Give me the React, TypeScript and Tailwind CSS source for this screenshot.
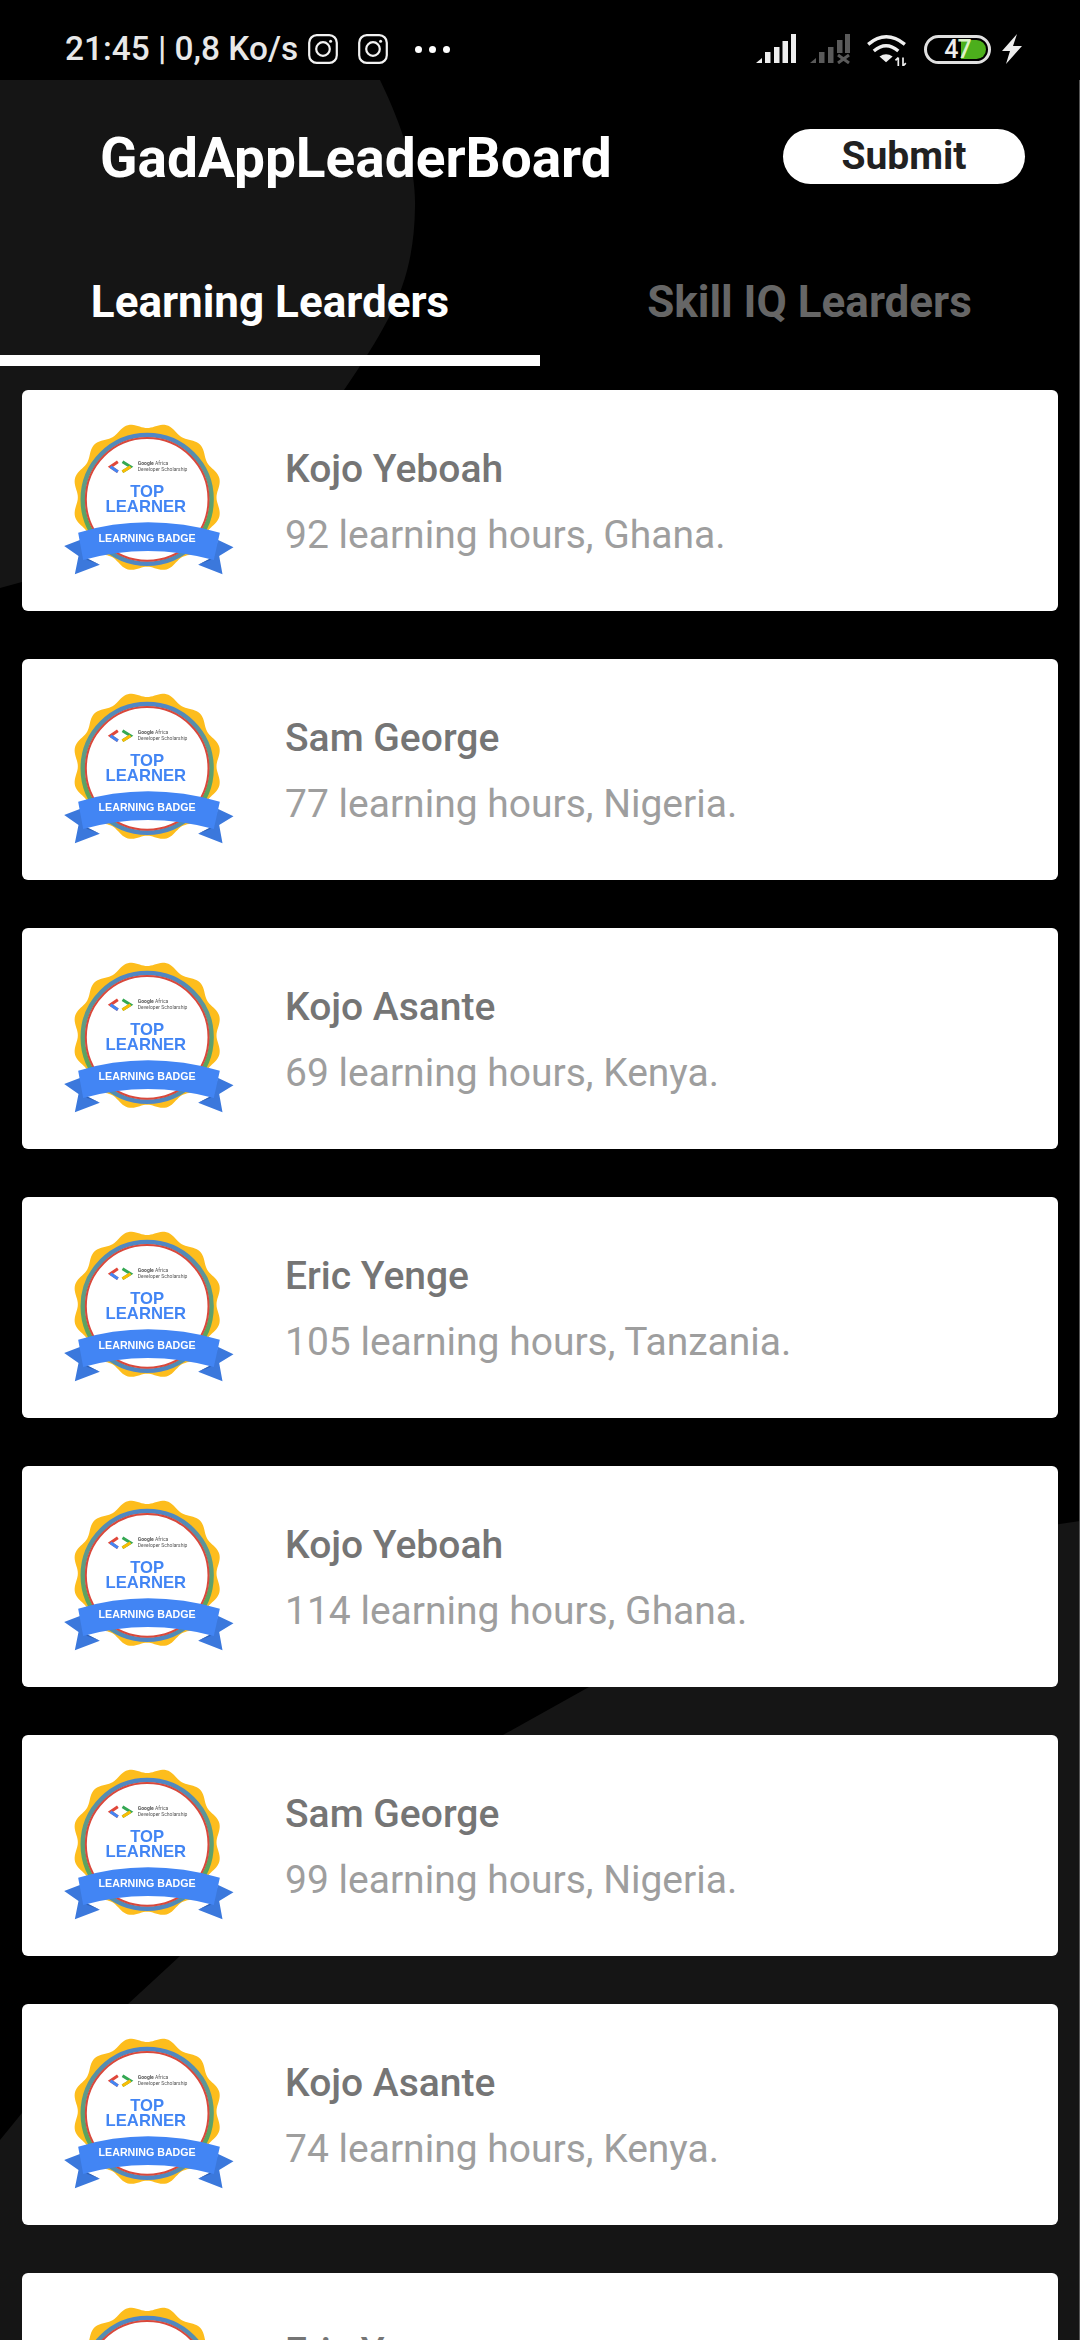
const font = "font-['Roboto',sans-serif]";

const scallop = (() => {
  const cx = 442, cy = 484, R = 216, a = 8, lobes = 12;
  const pts: string[] = [];
  for (let i = 0; i < 240; i++) {
    const t = (i / 240) * Math.PI * 2;
    const r = R + a * Math.cos(lobes * t + Math.PI);
    pts.push(`${(cx + r * Math.sin(t)).toFixed(1)} ${(cy - r * Math.cos(t)).toFixed(1)}`);
  }
  return `M${pts.join("L")}Z`;
})();

function Badge({ id }: { id: number }) {
  const g = `ring-${id}`;
  return (
    <svg viewBox="190 255 515 462" className="w-[172px] h-[154px] shrink-0 blur-[0.4px] -mt-[6px]">
      <defs>
        <linearGradient id={g} x1="0" y1="0" x2="0" y2="1">
          <stop offset="0" stopColor="#4f86c6" />
          <stop offset="0.35" stopColor="#5f9a8a" />
          <stop offset="0.7" stopColor="#5ba55b" />
          <stop offset="1" stopColor="#4f86c6" />
        </linearGradient>
      </defs>
      <path d={scallop} fill="#fdbd1d" />
      <circle cx="442" cy="490" r="193" fill="#fff" stroke={`url(#${g})`} strokeWidth="14" />
      <circle cx="442" cy="490" r="184" fill="#fff" stroke="#d9483b" strokeWidth="6" />
      <path d="M354 377 L332 392 L354 407" fill="none" stroke="#e0473a" strokeWidth="9" />
      <path d="M332 392 L354 407" fill="none" stroke="#4285f4" strokeWidth="9" />
      <path d="M368 377 L392 392 L368 407" fill="none" stroke="#34a853" strokeWidth="9" />
      <path d="M392 392 L368 407" fill="none" stroke="#fbbc05" strokeWidth="9" />
      <text x="414" y="386" fontSize="15" fontWeight="700" fill="#555" fontFamily="Roboto, sans-serif">Google <tspan fontWeight="400">Africa</tspan></text>
      <text x="414" y="405" fontSize="15" fill="#555" fontFamily="Roboto, sans-serif">Developer Scholarship</text>
      <text x="442" y="484" textAnchor="middle" fontSize="50" fontWeight="700" fill="#4285f4" fontFamily="'Liberation Sans', sans-serif">TOP</text>
      <text x="438" y="528" textAnchor="middle" fontSize="50" fontWeight="700" fill="#4285f4" fontFamily="'Liberation Sans', sans-serif">LEARNER</text>
      <path d="M193 630 L240 612 L262 668 L300 686 L225 715 L236 660 Z" fill="#3b78dc" />
      <path d="M701 634 L655 612 L632 668 L595 686 L668 715 L658 660 Z" fill="#3b78dc" />
      <path d="M248 660 L300 686 L262 672 Z" fill="#2f62b8" />
      <path d="M645 660 L595 686 L632 672 Z" fill="#2f62b8" />
      <path d="M235 590 Q442 528 660 590 L642 672 Q442 618 250 672 Z" fill="#4285f4" />
      <text x="442" y="617" textAnchor="middle" fontSize="32" fontWeight="700" fill="#fff" fontFamily="'Liberation Sans', sans-serif">LEARNING BADGE</text>
    </svg>
  );
}

function Insta() {
  return (
    <svg viewBox="0 0 30 30" className="w-[30px] h-[30px]" fill="none" stroke="#f2f2f2" strokeWidth="2.2">
      <rect x="1.2" y="1.2" width="27.6" height="27.6" rx="7.5" />
      <circle cx="15" cy="15" r="6.8" />
      <circle cx="22.6" cy="7.2" r="1.5" fill="#f2f2f2" stroke="none" />
    </svg>
  );
}

function Signal({ color, cross }: { color: string; cross?: boolean }) {
  return (
    <svg viewBox="0 0 40 30" className="w-[40px] h-[30px]" fill={color}>
      <path d="M0 29 L6 24 V29 Z" />
      <rect x="9" y="18" width="5.5" height="11" />
      <rect x="18" y="13" width="5.5" height="16" />
      {cross ? (
        <>
          <rect x="27" y="6" width="5.5" height="13" />
          <rect x="35" y="0" width="5" height="19" />
          <path d="M28 21 L39 29 M39 21 L28 29" stroke={color} strokeWidth="3" fill="none" />
        </>
      ) : (
        <>
          <rect x="26.5" y="7" width="5.5" height="22" />
          <rect x="35" y="0" width="5" height="29" />
        </>
      )}
    </svg>
  );
}

function Wifi() {
  return (
    <svg viewBox="0 0 44 34" className="w-[42px] h-[32px]" fill="none" stroke="#f0f0f0" strokeWidth="3.6">
      <path d="M2 11 Q21 -5 41 11" />
      <path d="M8 18 Q21 7 34 18" />
      <path d="M21 30 L14 24 Q21 19 28 24 Z" fill="#f0f0f0" stroke="none" />
      <path d="M34 25 V34 M34 25 L31 28 M39 34 V25 M39 34 L42 31" strokeWidth="1.8" />
    </svg>
  );
}

function Battery() {
  return (
    <div className="relative w-[67px] h-[29px] rounded-full border-[3px] border-[#e0e0e0] flex items-center justify-center">
      <div className="absolute right-[2px] top-[2px] bottom-[2px] w-[25px] rounded-r-full bg-[#4caf1c]" />
      <span className="relative text-[25px] leading-none font-medium text-[#eeeeee] tracking-[-1px]">
        4<span className="text-[#dcf2c8]">7</span>
      </span>
    </div>
  );
}

function Bolt() {
  return (
    <svg viewBox="0 0 20 30" className="w-[20px] h-[30px]" fill="#ededed">
      <path d="M15 0 L0 17 H8 L4 30 L20 12 H11 Z" />
    </svg>
  );
}

const rows = [
  ["Kojo Yeboah", "92 learning hours, Ghana."],
  ["Sam George", "77 learning hours, Nigeria."],
  ["Kojo Asante", "69 learning hours, Kenya."],
  ["Eric Yenge", "105 learning hours, Tanzania."],
  ["Kojo Yeboah", "114 learning hours, Ghana."],
  ["Sam George", "99 learning hours, Nigeria."],
  ["Kojo Asante", "74 learning hours, Kenya."],
  ["Eric Yenge", "88 learning hours, Tanzania."],
];

export default function App() {
  return (
    <div className={`relative w-[1080px] h-[2340px] overflow-hidden bg-black ${font}`}>
      <svg viewBox="0 0 1080 2340" className="absolute inset-0 w-[1080px] h-[2340px]" fill="#151515">
        <path d="M0 80 H380 C404 130 416 170 415 207 C414 280 392 320 344 390 C280 490 170 550 22 582 L0 588 Z" />
        <path d="M1080 1521 C860 1552 710 1612 589 1687 L503 1735 C380 1810 270 1870 180 1956 L128 2004 L22 2113 L0 2140 V2340 H1080 Z" />
      </svg>

      <div className="relative flex flex-col h-full">
        <div className="h-[80px] shrink-0 bg-black flex items-center justify-between pl-[65px] pr-[58px] pt-[18px]">
          <div className="flex items-center">
            <span className="text-[33.4px] font-medium text-[#e8e8e8] leading-none">21:45 | 0,8 Ko/s</span>
            <div className="flex items-center gap-[20px] ml-[10px]"><Insta /><Insta /></div>
            <div className="flex gap-[7px] ml-[27px]">
              <span className="w-[7px] h-[7px] rounded-full bg-white" />
              <span className="w-[7px] h-[7px] rounded-full bg-white" />
              <span className="w-[7px] h-[7px] rounded-full bg-white" />
            </div>
          </div>
          <div className="flex items-center">
            <Signal color="#eeeeee" />
            <div className="ml-[14px]"><Signal color="#5a5a5a" cross /></div>
            <div className="ml-[16px] mt-[2px]"><Wifi /></div>
            <div className="ml-[16px]"><Battery /></div>
            <div className="ml-[11px]"><Bolt /></div>
          </div>
        </div>

        <div className="flex-1 min-h-0 flex flex-col border-r border-[#555555]">
          <div className="h-[153px] shrink-0 flex items-center justify-between pl-[100px] pr-[54px]">
            <h1 className="text-[55px] font-bold text-white leading-none mt-[4px]">GadAppLeaderBoard</h1>
            <button className="w-[242px] h-[55px] rounded-full bg-white text-[#212121] text-[39px] font-bold leading-none">Submit</button>
          </div>

          <div className="h-[133px] shrink-0 flex">
            <div className="w-[540px] flex flex-col">
              <div className="flex-1 flex items-center justify-center pt-[15px] text-[44px] font-bold text-white leading-none">Learning Learders</div>
              <div className="h-[11px] bg-white" />
            </div>
            <div className="w-[539px] flex flex-col">
              <div className="flex-1 flex items-center justify-center pt-[15px] text-[44px] font-bold text-[#666666] leading-none">Skill IQ Learders</div>
              <div className="h-[11px]" />
            </div>
          </div>

          <div className="pt-[24px] pl-[22px] pr-[21px] flex flex-col gap-[48px]">
            {rows.map(([name, sub], i) => (
              <div key={i} className="h-[221px] shrink-0 bg-white rounded-[6px] flex items-center pl-[41px]">
                <Badge id={i} />
                <div className="ml-[50px] flex flex-col gap-[27px] mt-[4px]">
                  <div className="text-[39px] font-medium text-[#757575] leading-none">{name}</div>
                  <div className="text-[39px] text-[#9e9e9e] leading-none">{sub}</div>
                </div>
              </div>
            ))}
          </div>
        </div>
      </div>
    </div>
  );
}
